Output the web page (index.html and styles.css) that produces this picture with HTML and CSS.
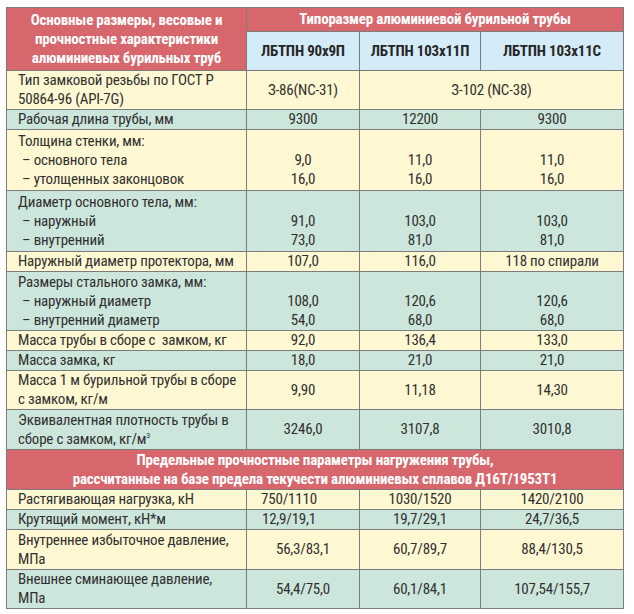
FILE: index.html
```html
<!DOCTYPE html>
<html lang="ru">
<head>
<meta charset="utf-8">
<title>Характеристики алюминиевых бурильных труб</title>
<link rel="stylesheet" href="styles.css">
</head>
<body>
<table class="spec">
  <colgroup>
    <col class="c1"><col class="c2"><col class="c3"><col class="c4">
  </colgroup>
  <thead>
    <tr class="h25">
      <th rowspan="2" class="red lefthead">Основные размеры, весовые и<br>прочностные характеристики<br>алюминиевых бурильных труб</th>
      <th colspan="3" class="red">Типоразмер алюминиевой бурильной трубы</th>
    </tr>
    <tr class="h39">
      <th class="blue">ЛБТПН 90х9П</th>
      <th class="blue">ЛБТПН 103х11П</th>
      <th class="blue">ЛБТПН 103х11С</th>
    </tr>
  </thead>
  <tbody>
    <tr class="y h39">
      <td class="name">Тип замковой резьбы по ГОСТ Р<br>50864-96 (API-7G)</td>
      <td>З-86(NC-31)</td>
      <td colspan="2">З-102 (NC-38)</td>
    </tr>
    <tr class="g h20">
      <td class="name">Рабочая длина трубы, мм</td>
      <td>9300</td><td>12200</td><td>9300</td>
    </tr>
    <tr class="y h61">
      <td class="name">Толщина стенки, мм:<br><span class="sub">– основного тела</span><br><span class="sub">– утолщенных законцовок</span></td>
      <td><br>9,0<br>16,0</td><td><br>11,0<br>16,0</td><td><br>11,0<br>16,0</td>
    </tr>
    <tr class="g h61">
      <td class="name">Диаметр основного тела, мм:<br><span class="sub">– наружный</span><br><span class="sub">– внутренний</span></td>
      <td><br>91,0<br>73,0</td><td><br>103,0<br>81,0</td><td><br>103,0<br>81,0</td>
    </tr>
    <tr class="y h20">
      <td class="name">Наружный диаметр протектора, мм</td>
      <td>107,0</td><td>116,0</td><td>118 по спирали</td>
    </tr>
    <tr class="g h59">
      <td class="name">Размеры стального замка, мм:<br><span class="sub">– наружный диаметр</span><br><span class="sub">– внутренний диаметр</span></td>
      <td><br>108,0<br>54,0</td><td><br>120,6<br>68,0</td><td><br>120,6<br>68,0</td>
    </tr>
    <tr class="y h19">
      <td class="name">Масса трубы в сборе с&nbsp; замком, кг</td>
      <td>92,0</td><td>136,4</td><td>133,0</td>
    </tr>
    <tr class="g h20">
      <td class="name">Масса замка, кг</td>
      <td>18,0</td><td>21,0</td><td>21,0</td>
    </tr>
    <tr class="y h39">
      <td class="name">Масса 1 м бурильной трубы в сборе<br>с замком, кг/м</td>
      <td>9,90</td><td>11,18</td><td>14,30</td>
    </tr>
    <tr class="g h40">
      <td class="name">Эквивалентная плотность трубы в<br>сборе с замком, кг/м<sup>3</sup></td>
      <td>3246,0</td><td>3107,8</td><td>3010,8</td>
    </tr>
    <tr class="h40">
      <th colspan="4" class="red section">Предельные прочностные параметры нагружения трубы,<br>рассчитанные на базе предела текучести алюминиевых сплавов Д16Т/1953Т1</th>
    </tr>
    <tr class="y h18">
      <td class="name">Растягивающая нагрузка, кН</td>
      <td class="shift">750/1110</td><td>1030/1520</td><td>1420/2100</td>
    </tr>
    <tr class="g h19">
      <td class="name">Крутящий момент, кН*м</td>
      <td class="shift">12,9/19,1</td><td>19,7/29,1</td><td>24,7/36,5</td>
    </tr>
    <tr class="y h40">
      <td class="name">Внутреннее избыточное давление,<br>МПа</td>
      <td>56,3/83,1</td><td>60,7/89,7</td><td>88,4/130,5</td>
    </tr>
    <tr class="g h38">
      <td class="name">Внешнее сминающее давление,<br>МПа</td>
      <td>54,4/75,0</td><td>60,1/84,1</td><td>107,54/155,7</td>
    </tr>
  </tbody>
</table>
</body>
</html>
```

FILE: styles.css
```css
html, body {
  margin: 0;
  background: #ffffff;
}

body {
  padding: 7px 0 0 6px;
  font-family: "Roboto Condensed", "Open Sans", "DejaVu Sans Condensed", sans-serif;
  color: #303030;
}

.spec {
  border-collapse: collapse;
  table-layout: fixed;
  width: 617px;
  font-size: 15px;
  letter-spacing: -0.2px;
  line-height: 19px;
  border: 1px solid #6e6e6e;
}

.c1 { width: 240px; }
.c2 { width: 113px; }
.c3 { width: 121px; }
.c4 { width: 143px; }

.spec th,
.spec td {
  border: 1px solid #7c7c7c;
  padding: 0 4px;
  text-align: center;
  vertical-align: middle;
  white-space: nowrap;
}

.spec td.name {
  text-align: left;
  padding-left: 11px;
}

.sub {
  padding-left: 4px;
}

.spec td.shift {
  padding-right: 32px;
}

.red {
  background: #d8676d;
  color: #ffffff;
  font-weight: bold;
}

.blue {
  background: #d4ecf7;
  color: #262626;
  font-weight: bold;
}

.lefthead {
  line-height: 19px;
}

.y { background: #fff8d2; }
.g { background: #cde6dc; }

sup {
  font-size: 8px;
  line-height: 0;
  vertical-align: 6px;
}

.h18 { height: 18px; }
.h19 { height: 19px; }
.h20 { height: 20px; }
.h25 { height: 24px; }
.h38 { height: 38px; }
.h39 { height: 39px; }
.h40 { height: 40px; }
.h59 { height: 59px; }
.h61 { height: 61px; }
```
